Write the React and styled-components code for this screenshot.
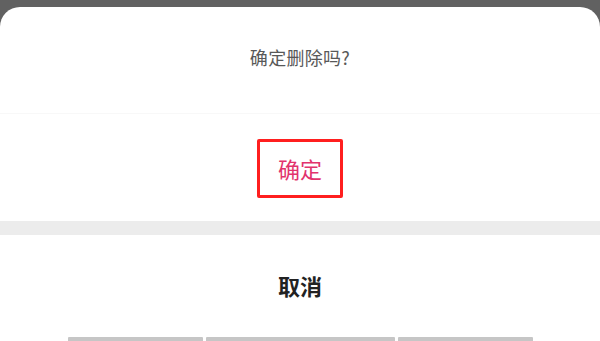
import React from "react";
import styled, { createGlobalStyle } from "styled-components";

const Global = createGlobalStyle`
  html, body { margin: 0; padding: 0; background: #616161; }
  body { font-family: "Noto Sans CJK SC", "Noto Sans", sans-serif; }
  #root { width: 600px; height: 341px; overflow: hidden; }
`;

const Screen = styled.div`
  width: 600px;
  height: 341px;
  background: #616161;
  padding-top: 7px;
  box-sizing: border-box;
  display: flex;
  flex-direction: column;
`;

const Sheet = styled.div`
  flex: 1;
  background: #ffffff;
  border-radius: 20px 20px 0 0;
  display: flex;
  flex-direction: column;
  overflow: hidden;
`;

const TitleRow = styled.div`
  height: 107px;
  display: flex;
  align-items: center;
  justify-content: center;
  border-bottom: 1px solid #f8f8f8;
  box-sizing: border-box;
  padding-bottom: 6px;
`;

const Title = styled.span`
  font-size: 18px;
  color: #585858;
  letter-spacing: 0.3px;
`;

const ConfirmRow = styled.div`
  height: 107px;
  display: flex;
  align-items: center;
  justify-content: center;
`;

const ConfirmBox = styled.div`
  width: 86px;
  height: 59px;
  box-sizing: border-box;
  border: 3px solid #ff1f1f;
  border-radius: 2px;
  display: flex;
  align-items: center;
  justify-content: center;
  margin-top: 1px;
`;

const ConfirmText = styled.span`
  font-size: 22px;
  color: #e2336d;
`;

const Gap = styled.div`
  height: 14px;
  background: #ececec;
`;

const CancelRow = styled.div`
  flex: 1;
  display: flex;
  align-items: center;
  justify-content: center;
  padding-bottom: 2px;
`;

const CancelText = styled.span`
  font-size: 22px;
  font-weight: 700;
  color: #222222;
`;

const KeyStrip = styled.div`
  height: 4px;
  display: flex;
  padding-left: 68px;
  gap: 3px;
`;

const Key = styled.div`
  width: ${(p) => p.$w}px;
  height: 4px;
  background: #c6c6c6;
  border-radius: 1px 1px 0 0;
`;

export default function App() {
  return (
    <>
      <Global />
      <Screen>
        <Sheet>
          <TitleRow>
            <Title>确定删除吗?</Title>
          </TitleRow>
          <ConfirmRow>
            <ConfirmBox>
              <ConfirmText>确定</ConfirmText>
            </ConfirmBox>
          </ConfirmRow>
          <Gap />
          <CancelRow>
            <CancelText>取消</CancelText>
          </CancelRow>
          <KeyStrip>
            <Key $w={135} />
            <Key $w={189} />
            <Key $w={135} />
          </KeyStrip>
        </Sheet>
      </Screen>
    </>
  );
}
